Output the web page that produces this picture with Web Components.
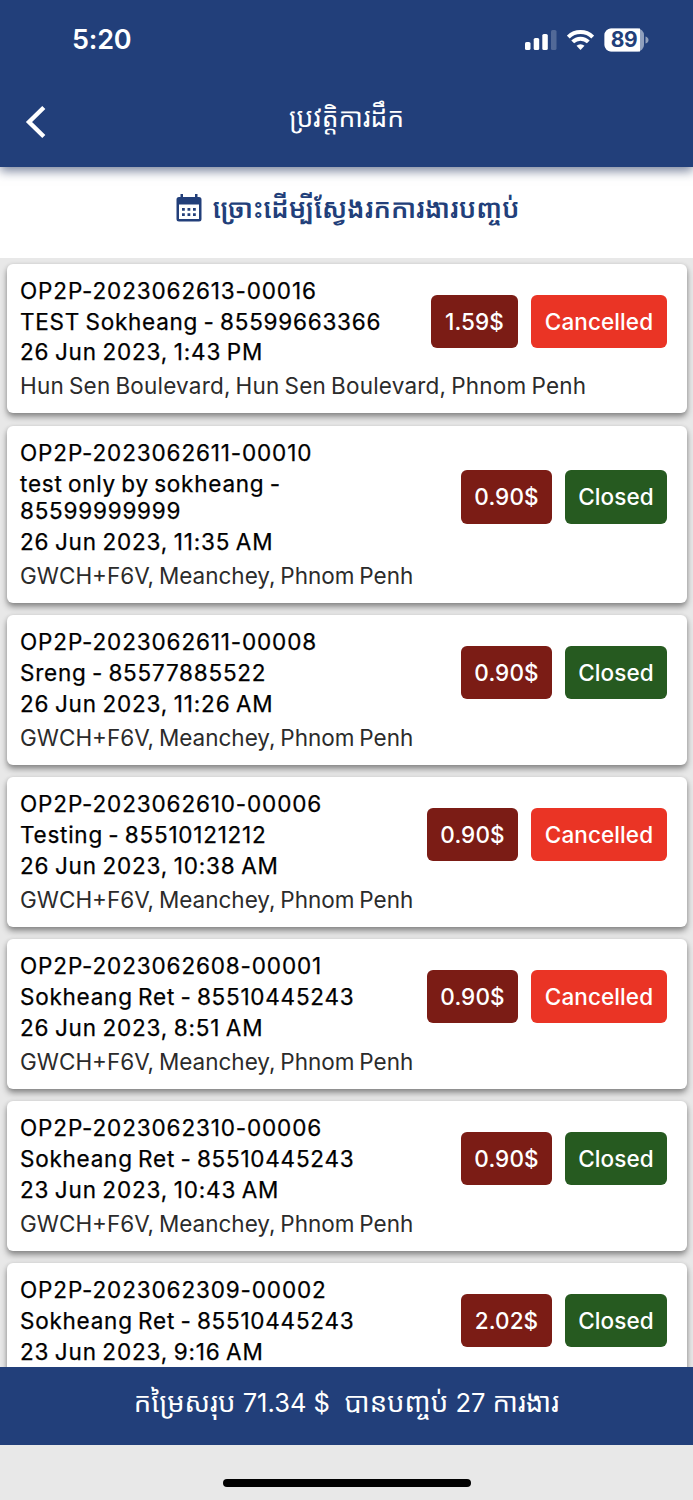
<!DOCTYPE html>
<html lang="km">
<head>
<meta charset="utf-8">
<title>ប្រវត្តិការដឹក</title>
<style>
html,body{margin:0;height:1500px;overflow:hidden;background:#e8e8e8;font-family:Inter,"Noto Sans Khmer","Khmer OS","Noto Sans",sans-serif}
</style>
</head>
<body>
<history-app></history-app>
<script>
const define=(name,html,after)=>customElements.define(name,class extends HTMLElement{
  connectedCallback(){
    if(this.shadowRoot)return;
    const t=document.createElement('template');
    t.innerHTML=html;
    this.attachShadow({mode:'open'}).append(t.content.cloneNode(true));
    if(after)after(this,this.shadowRoot);
  }
});

define('status-bar',`<style>
:host{display:flex;justify-content:space-between;align-items:center;height:80px;padding:0 44px 0 72px;box-sizing:border-box;color:#fff}
time{font-size:27px;font-weight:600;line-height:32px;letter-spacing:-.2px}
.icons{display:flex;align-items:center;gap:10px}
svg{display:block}
.bat{display:grid;width:45px;height:24px}
.bat>*{grid-area:1/1}
.bat span{width:40px;text-align:center;color:#223f7a;font-size:21px;font-weight:700;line-height:24px;letter-spacing:-.4px}
</style>
<time>5:20</time>
<div class="icons">
<svg width="32" height="20" viewBox="0 0 32 20" fill="#fff"><rect x="0" y="12" width="5.500" height="8" rx="1.600"/><rect x="8.700" y="8" width="5.500" height="12" rx="1.600"/><rect x="17.300" y="4" width="5.500" height="16" rx="1.600"/><rect x="26" y="0" width="5.500" height="20" rx="1.600" opacity=".22"/></svg>
<svg width="27" height="20" viewBox="0 0 27 20" fill="none" stroke="#fff" stroke-width="4"><path d="M1.300 7a17.600 17.600 0 0 1 24.400 0"/><path d="M5.700 11.900a11 11 0 0 1 15.600 0"/><path d="M13.500 20l-4-4.200a5.900 5.900 0 0 1 8 0z" fill="#fff" stroke="none"/></svg>
<div class="bat"><svg width="45" height="24" viewBox="0 0 45 24"><path d="M7 .5H33.500a6.500 6.500 0 0 1 6.500 6.500V17a6.500 6.500 0 0 1-6.500 6.500H7A6.500 6.500 0 0 1 .5 17V7A6.500 6.500 0 0 1 7 .5z" fill="#90a0bd"/><path d="M7 .5H36V23.500H7A6.500 6.500 0 0 1 .5 17V7A6.500 6.500 0 0 1 7 .5z" fill="#fff"/><path d="M41.500 8.500q3 1 3 3.500t-3 3.500z" fill="#90a0bd"/></svg><span>89</span></div>
</div>`);

define('nav-bar',`<style>
:host{display:grid;grid-template-columns:80px 1fr 80px;height:87px;color:#fff}
svg{display:block;margin:25px 0 0 24.500px}
h1{margin:17px 0 0;text-align:center;font-size:26.400px;line-height:40px;font-weight:400}
</style>
<svg width="21" height="34" viewBox="0 0 21 34" fill="none" stroke="#fff" stroke-width="4.400"><path d="M18.800 2.500 4 17 18.800 31.500"/></svg>
<h1><slot></slot></h1>`);

define('filter-button',`<style>
:host{display:flex;justify-content:center;align-items:flex-start;height:91px;box-sizing:border-box;padding:22px 0 0 3px;gap:10px;color:#223f7a;background:#fff}
svg{display:block;margin-top:5px}
span{font-size:26.300px;font-weight:600;line-height:40px;white-space:nowrap}
</style>
<svg width="26" height="28" viewBox="0 0 26 28"><path d="M4.500 0h2.500v3h12V0h2.500v3H23q2.500 0 2.500 2.500v19.500q0 2.500-2.500 2.500H3Q.5 27.500.5 25V5.500Q.5 3 3 3h1.500zM3 10.500V25h20V10.500z" fill="#223f7a" fill-rule="evenodd"/><path d="M6 14h2.800v2.800H6zm5.500 0h2.800v2.800h-2.800zm5.500 0h2.800v2.800H17zM6 19.200h2.800V22H6zm5.500 0h2.800V22h-2.800zm5.500 0h2.800V22H17z" fill="#223f7a"/></svg>
<span><slot></slot></span>`);

define('job-badge',`<style>
:host{display:flex;align-items:center;justify-content:center;height:53.500px;border-radius:6px;color:#fff;background:#7b1c15;font-size:22.500px;font-weight:500;letter-spacing:.1px;white-space:nowrap}
:host([kind=Cancelled]){background:#ea3425;width:136px}
:host([kind=Closed]){background:#265a20;width:102px}
</style><slot></slot>`);

define('job-card',`<style>
:host{display:block;box-sizing:border-box;background:#fff;border-radius:6px;padding:12.700px 19.500px 13.300px 13.500px;box-shadow:0 4px 6px rgba(0,0,0,.38),0 1px 4px rgba(0,0,0,.12);font-size:22.500px;line-height:27.500px;color:#000}
.top{display:flex;align-items:center;justify-content:space-between}
.info{display:grid;gap:3.400px;letter-spacing:.86px;word-spacing:-1.700px;-webkit-text-stroke:.25px #000;white-space:nowrap}
.who{letter-spacing:.76px}
.badges{display:flex;gap:13px}
.addr{margin-top:6.500px;letter-spacing:.2px;word-spacing:-1.500px;color:#2b2b2b;white-space:nowrap;min-height:27.500px}
.addr.plus{letter-spacing:0}
</style>
<div class="top"><div class="info"><div class="id"></div><div class="who"></div><div class="date"></div></div>
<div class="badges"><job-badge class="price"></job-badge><job-badge class="state"></job-badge></div></div>
<div class="addr"></div>`,(el,r)=>{
  const d=el.data,set=(c,v)=>r.querySelector('.'+c).textContent=v;
  set('id',d[0]);set('date',d[2]);set('addr',d[3]);set('price',d[4]);set('state',d[5]);
  r.querySelector('.addr').classList.toggle('plus',d[3].includes('+'));
  const who=r.querySelector('.who');
  d[1].split('\n').forEach((s,i)=>{if(i)who.append(document.createElement('br'));who.append(s)});
  r.querySelector('.state').setAttribute('kind',d[5]);
  r.querySelector('.price').style.width=d[6]+'px';
});

define('job-list',`<style>
:host{display:flex;flex-direction:column;gap:12.700px;height:1109px;box-sizing:border-box;padding:6px 6.500px 0;overflow:hidden;background:#e8e8e8}
job-card{flex:none}
</style>`,(el,r)=>{
  const g='GWCH+F6V, Meanchey, Phnom Penh';
  [['OP2P-2023062613-00016','TEST Sokheang - 85599663366','26 Jun 2023, 1:43 PM','Hun Sen Boulevard, Hun Sen Boulevard, Phnom Penh','1.59$','Cancelled',87],
   ['OP2P-2023062611-00010','test only by sokheang -\n85599999999','26 Jun 2023, 11:35 AM',g,'0.90$','Closed',91],
   ['OP2P-2023062611-00008','Sreng - 85577885522','26 Jun 2023, 11:26 AM',g,'0.90$','Closed',91],
   ['OP2P-2023062610-00006','Testing - 85510121212','26 Jun 2023, 10:38 AM',g,'0.90$','Cancelled',91],
   ['OP2P-2023062608-00001','Sokheang Ret - 85510445243','26 Jun 2023, 8:51 AM',g,'0.90$','Cancelled',91],
   ['OP2P-2023062310-00006','Sokheang Ret - 85510445243','23 Jun 2023, 10:43 AM',g,'0.90$','Closed',91],
   ['OP2P-2023062309-00002','Sokheang Ret - 85510445243','23 Jun 2023, 9:16 AM','','2.02$','Closed',91]
  ].forEach(d=>{const c=document.createElement('job-card');c.data=d;r.append(c)});
});

define('total-bar',`<style>
:host{display:flex;justify-content:center;height:77.500px;box-sizing:border-box;padding-top:15px;background:#223f7a;color:#fff;font-size:27.500px;line-height:40px;white-space:pre}
::slotted(b){font-weight:400;font-size:25.500px}
</style><div><slot></slot></div>`);

define('home-indicator',`<style>
:host{display:flex;justify-content:center;padding-top:34px}
i{width:248px;height:8px;border-radius:4px;background:#000}
</style><i></i>`);

define('history-app',`<style>
:host{display:flex;flex-direction:column;width:693px;height:1500px;overflow:hidden}
header{flex:none;position:relative;height:167px;background:#223f7a;box-shadow:0 4px 10px rgba(34,50,90,.6)}
</style>
<header><status-bar></status-bar><nav-bar>ប្រវត្តិការដឹក</nav-bar></header>
<filter-button>ច្រោះដើម្បីស្វែងរកការងារបញ្ចប់</filter-button>
<job-list></job-list>
<total-bar>កម្រៃសរុប<b> 71.34 $  </b>បានបញ្ចប់<b> 27 </b>ការងារ</total-bar>
<home-indicator></home-indicator>`);
</script>
</body>
</html>
